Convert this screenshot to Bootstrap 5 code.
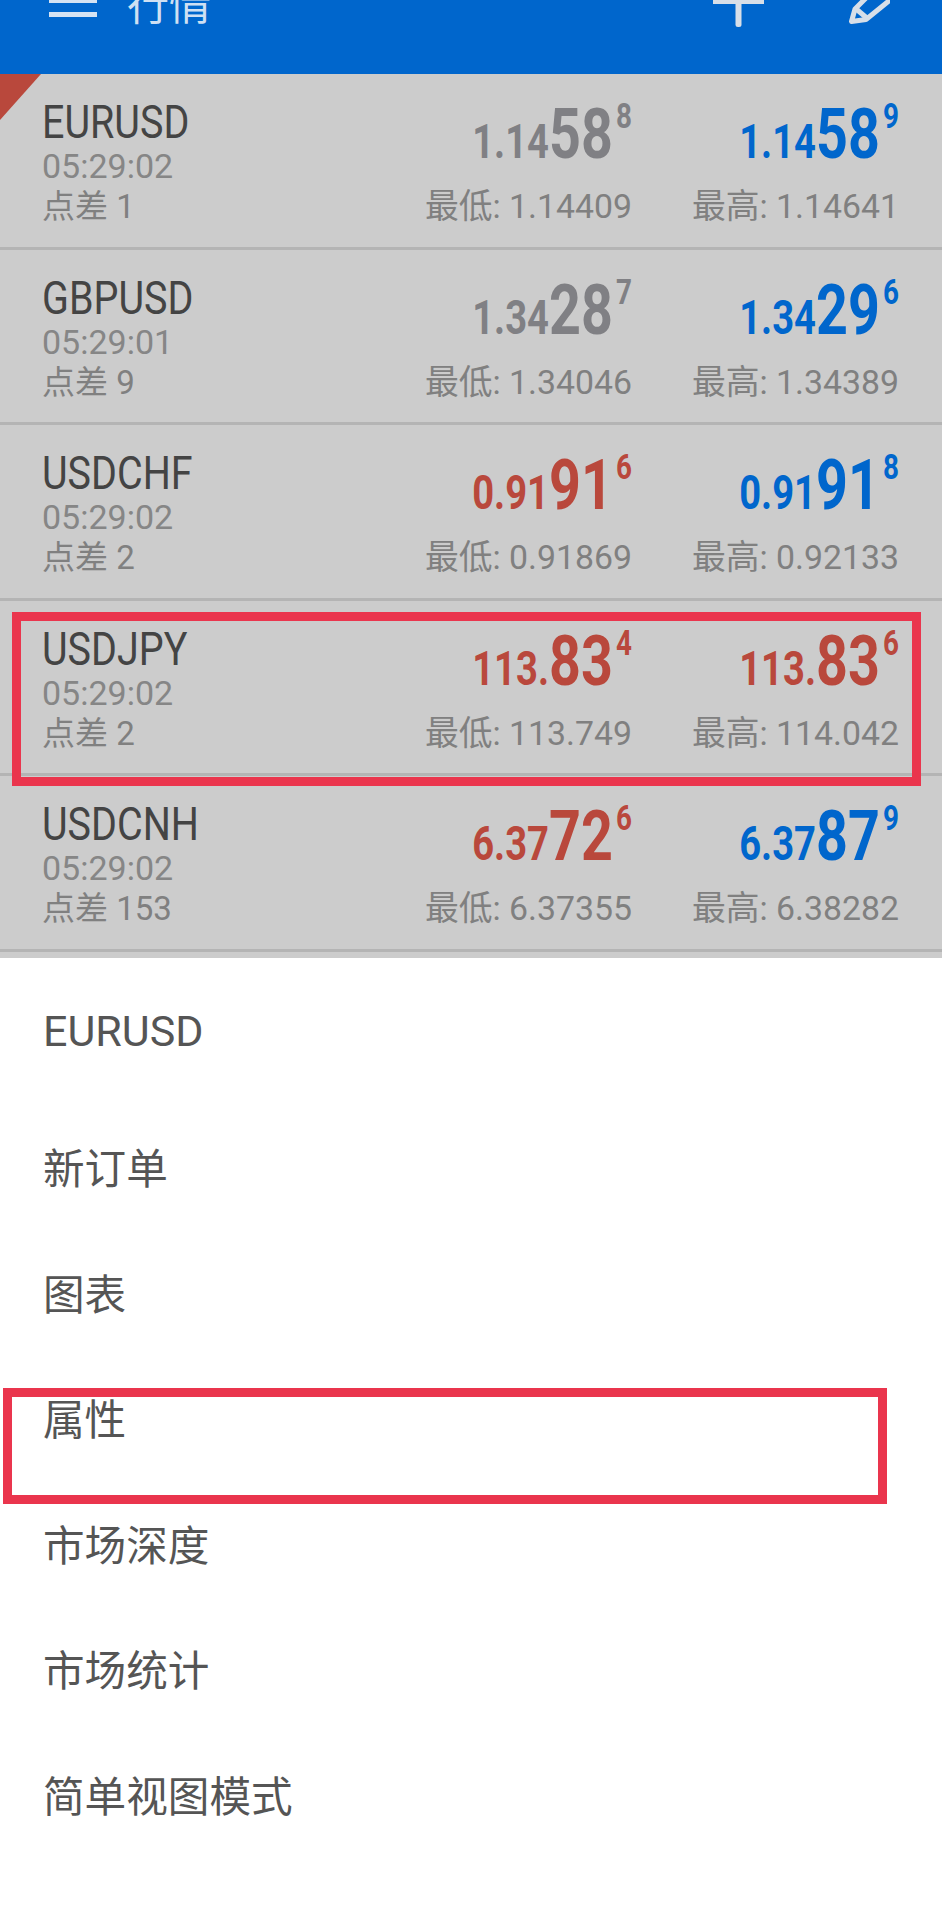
<!DOCTYPE html>
<html lang="zh">
<head>
<meta charset="utf-8">
<title>行情</title>
<link href="https://cdn.jsdelivr.net/npm/bootstrap@5.3.0/dist/css/bootstrap.min.css" rel="stylesheet">
<style>
body{margin:0;background:#fff;font-family:Roboto,"Noto Sans CJK SC",sans-serif;width:942px;height:1920px;overflow:hidden}
.stage{position:relative;width:942px;height:1920px;overflow:hidden}
.topbar{height:74px;background:#0066cc;overflow:hidden;color:#cfe0f3}
.topbar-in{margin-top:-40px;height:92px;padding:0 52px 0 49px}
.topbar-title{font-size:42px;line-height:60px;margin-left:30px}
.topbar svg{display:block;flex:none}
.ico-menu{margin-bottom:11px}
.ico-plus{margin-bottom:12px;margin-right:85px}
.quotes{background:#cccccc;padding-bottom:6.5px}
.qrow{position:relative;height:175.5px;border-bottom:3px solid #b4b4b4;padding:20px 43px 0 42px}
.qrow:first-child::before{content:"";position:absolute;left:0;top:0;width:0;height:0;border-top:46px solid #b9483c;border-right:41px solid transparent}
.sym{font-size:47px;line-height:56px;color:#444;transform:scaleX(.84);transform-origin:left center;white-space:nowrap}
.tm{font-size:34px;line-height:32px;color:#868686;white-space:nowrap}
.sprd{font-size:33px;line-height:46px;margin-top:2px;color:#808080;white-space:nowrap}
.qcol{width:267px;text-align:right}
.price{font-weight:700;font-size:48px;line-height:56px;height:56px;margin-top:12px;transform:scaleX(.795);transform-origin:right center;white-space:nowrap}
.price b{font-size:70px;font-weight:700}
.price i{font-style:normal;font-weight:700;font-size:35px;line-height:0;vertical-align:30px;margin-left:4px}
.range{font-size:33.8px;line-height:46px;margin-top:22px;color:#808080;white-space:nowrap}
.tx-grey{color:#808084}
.tx-blue{color:#0066cc}
.tx-red{color:#b9483c}
.sheet{background:#fff}
.sheet-title{height:149px;line-height:147px;padding-left:43px;font-size:43px;color:#555}
.sheet .list-group-item{height:125.5px;line-height:125.5px;padding:0 0 0 43px;font-size:41.6px;color:#555;border:0;background:transparent}
.mark-box{position:absolute;border:9px solid #ea354d;pointer-events:none}
.mark-a{left:12px;top:612px;width:909px;height:174px}
.mark-b{left:3px;top:1388px;width:884px;height:116px}
</style>
</head>
<body>
<div class="stage">
  <div class="topbar">
    <div class="topbar-in d-flex align-items-center">
      <svg class="ico-menu" width="48" height="33" viewBox="0 0 48 33" fill="#d5e3f3"><rect y="0" width="48" height="5"/><rect y="14" width="48" height="5"/><rect y="28" width="48" height="5"/></svg>
      <span class="topbar-title">行情</span>
      <div class="ms-auto d-flex align-items-center">
        <svg class="ico-plus" width="51" height="54" viewBox="0 0 51 54" fill="#d8dfe8"><rect x="22.5" y="0" width="6" height="54" rx="2.5"/><rect x="0" y="23" width="51" height="8"/></svg>
        <svg width="41" height="36" viewBox="850 -12 41 36" fill="none" stroke="#d8dfe8" stroke-width="5" stroke-linejoin="round"><path d="M852.5 21.5 L856 9 L877 -12 L891 0 L867 19.5 Z"/><path d="M856 8 L869 19"/></svg>
      </div>
    </div>
  </div>

  <div class="quotes">
    <div class="qrow d-flex">
      <div class="flex-grow-1"><div class="sym">EURUSD</div><div class="tm">05:29:02</div><div class="sprd">点差 1</div></div>
      <div class="qcol"><div class="price tx-grey">1.14<b>58</b><i>8</i></div><div class="range">最低: 1.14409</div></div>
      <div class="qcol"><div class="price tx-blue">1.14<b>58</b><i>9</i></div><div class="range">最高: 1.14641</div></div>
    </div>
    <div class="qrow d-flex">
      <div class="flex-grow-1"><div class="sym">GBPUSD</div><div class="tm">05:29:01</div><div class="sprd">点差 9</div></div>
      <div class="qcol"><div class="price tx-grey">1.34<b>28</b><i>7</i></div><div class="range">最低: 1.34046</div></div>
      <div class="qcol"><div class="price tx-blue">1.34<b>29</b><i>6</i></div><div class="range">最高: 1.34389</div></div>
    </div>
    <div class="qrow d-flex">
      <div class="flex-grow-1"><div class="sym">USDCHF</div><div class="tm">05:29:02</div><div class="sprd">点差 2</div></div>
      <div class="qcol"><div class="price tx-red">0.91<b>91</b><i>6</i></div><div class="range">最低: 0.91869</div></div>
      <div class="qcol"><div class="price tx-blue">0.91<b>91</b><i>8</i></div><div class="range">最高: 0.92133</div></div>
    </div>
    <div class="qrow d-flex">
      <div class="flex-grow-1"><div class="sym">USDJPY</div><div class="tm">05:29:02</div><div class="sprd">点差 2</div></div>
      <div class="qcol"><div class="price tx-red">113.<b>83</b><i>4</i></div><div class="range">最低: 113.749</div></div>
      <div class="qcol"><div class="price tx-red">113.<b>83</b><i>6</i></div><div class="range">最高: 114.042</div></div>
    </div>
    <div class="qrow d-flex">
      <div class="flex-grow-1"><div class="sym">USDCNH</div><div class="tm">05:29:02</div><div class="sprd">点差 153</div></div>
      <div class="qcol"><div class="price tx-red">6.37<b>72</b><i>6</i></div><div class="range">最低: 6.37355</div></div>
      <div class="qcol"><div class="price tx-blue">6.37<b>87</b><i>9</i></div><div class="range">最高: 6.38282</div></div>
    </div>
  </div>

  <div class="sheet">
    <div class="sheet-title">EURUSD</div>
    <div class="list-group list-group-flush">
      <div class="list-group-item">新订单</div>
      <div class="list-group-item">图表</div>
      <div class="list-group-item">属性</div>
      <div class="list-group-item">市场深度</div>
      <div class="list-group-item">市场统计</div>
      <div class="list-group-item">简单视图模式</div>
    </div>
  </div>

  <div class="mark-box mark-a"></div>
  <div class="mark-box mark-b"></div>
</div>
<script src="https://cdn.jsdelivr.net/npm/bootstrap@5.3.0/dist/js/bootstrap.bundle.min.js"></script>
</body>
</html>
